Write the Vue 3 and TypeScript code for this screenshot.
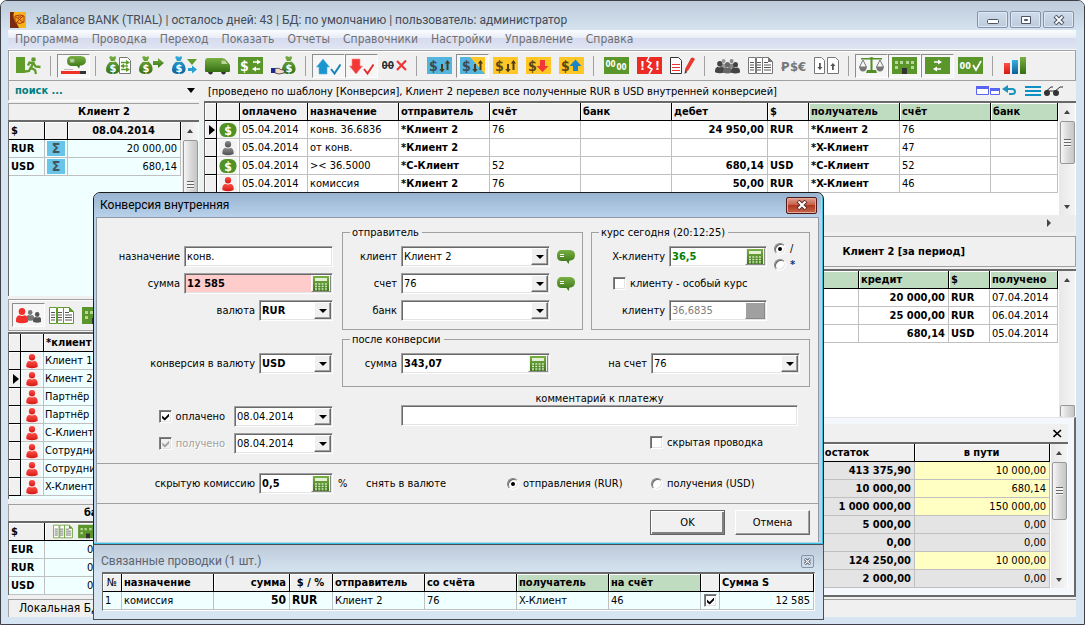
<script setup lang="ts">
import { ref } from 'vue'

interface Tool { icon?: string; label?: string; on?: boolean; sep?: boolean }
interface Entry { icon: string; date: string; note: string; from: string; acc: string; debit: string; cur: string; to: string; toAcc: string }

const bag = (fill: string) =>
  `<path fill="${fill}" d="M3 1 L5 0 L7 1 L9.500 0 L10 2 L8.500 5 C12 7 14 10 13.500 14 C13 17 10 18 7 18 C3 18 0 17 0 13.500 C0 10 2 7 5 5z"/><path d="M4 5.500h5" stroke="#dfeccb"/><text x="7" y="15.500" text-anchor="middle" class="ic" font-size="11" fill="#fff">$</text>`
const card = (c: string) => `<rect x="0" y="1" width="25" height="17" fill="${c}"/>`
const flow = '<g fill="#4a3c18"><path d="M14 8h2v5h1.700L15 16.500 12.300 13H14z"/><path d="M19.500 14h2V7.500h1.500L20.500 4 17.800 7.500h1.700z"/></g>'
const dollar = (c: string, x = 2) => `<text x="${x}" y="14.500" class="ic" font-size="14" fill="${c}">$</text>`
const man = (c: string, x: number, y: number, s: number) =>
  `<g transform="translate(${x} ${y}) scale(${s})" fill="${c}"><ellipse cx="6" cy="3.500" rx="3.300" ry="3.500"/><path d="M0 12Q0 8.500 3 7.300Q6 8.600 9 7.300Q12 8.500 12 12V14Q6 16.500 0 14z"/></g>`
const sheets = (c: string) =>
  `<g fill="#fff" stroke="${c}"><path d="M.500 1.500h7v16h-7z"/><path d="M8.500 1.500h6v16h-6z"/><path d="M14.500 1.500h6l4 4v12h-10z"/></g><path d="M20 1v5h5z" fill="${c}"/><path d="M2 6.500h4M2 9h4M2 11.500h4M2 14h4M9 6.500h4M9 9h4M9 11.500h4M9 14h4M16 6.500h4M16 9h7M16 11.500h7M16 14h7" stroke="#555"/>`
const bubble = '<path fill="url(#gg)" d="M4 0h9q5 .300 5 5t-4 5.500h-1.500L11.500 14 9.500 11H4Q0 10.500 0 5.500T4 0z"/><path d="M3 4.500h4M3 6.500h4" stroke="#fff"/>'
const windows = '<path fill="#b5d896" d="M3 5h3v3H3zM8 5h3v3H8zM14 5h3v3h-3zM19 5h3v3h-3zM3 10h3v3H3zM19 10h3v3h-3z"/><path fill="#333" d="M10 12h5v6h-5z"/>'

const icons: Record<string, string> = {
  exit: '<path fill="#5f9c2b" d="M0 1h9v16H0z"/><circle cx="17.500" cy="3.500" r="2.300" fill="#5f9c2b"/><path d="M12 9.500l1.500-3 4 .500 2 3.500 5 .500M17 7l-2 5 4 2 1 4M15 11l-2 4-4 .500" fill="none" stroke="#5f9c2b" stroke-width="2.300"/>',
  talk: `<g transform="translate(6 0) scale(1.050 .900)">${bubble}</g><path fill="#f03020" d="M0 15h19v3H0z"/><path fill="#333" d="M19 15h6v3h-6z"/><path d="M3 13.500h9" stroke="#bbb"/>`,
  bagDoc: `${bag('url(#gg)')}<path d="M13.500 1.500h8l3 3v13h-11z" fill="#fff" stroke="#777"/><path d="M15 6.500h7M15 10h7M15 13.500h7" stroke="#5f9c2b" stroke-width="1.500"/><path fill="#5f9c2b" d="M20 4l4 2.500-4 2.500zM18 7.500v5L14.500 10zM20 11l4 2.500-4 2.500z"/>`,
  bagOut: `${bag('url(#gg)')}<path fill="url(#gg)" d="M14 5h5V2l6 5-6 5V9h-5z"/>`,
  bagBlue: `${bag('url(#gb)')}<path fill="#5f9c2b" d="M15 3h10l-5 6z"/><path fill="#22a0d2" d="M16 12h4V9.500l5 4-5 4V15h-4z"/>`,
  van: '<path fill="url(#gg)" d="M2 2h15q3 0 5 3l3 4v6q0 1-1 1H1q-1 0-1-1V5q0-2 2-3z"/><path fill="#b9d59c" d="M16.500 4.500h3.500l2.500 3.500h-6z"/><path fill="#333" d="M3 16h5q-.500 2.500-2.500 2.500T3 16zM16 16h5q-.500 2.500-2.500 2.500T16 16z"/>',
  cardMove: `${card('#5a962a')}${dollar('#fff')}<path d="M15 6h6M16 13h6" stroke="#fff" stroke-width="1.500"/><path fill="#fff" d="M19 3.500l4 2.500-4 2.500zM18 10.500v5L14 13z"/>`,
  handBag: `<g transform="translate(11 0)">${bag('url(#gg)')}</g><path fill="#1a2a9c" d="M0 12h4v5H0z"/><path d="M4 12.500q4-1 6 1l4 1-1 2.500-5 1-4-1z" fill="#f3d8c8" stroke="#333" stroke-width=".8"/>`,
  upOk: '<path fill="#1c94cf" stroke="#56b4de" stroke-width=".6" d="M7 3l6.500 8H11v7H3v-7H.500z"/><path d="M15 13l3.500 4.500 6-9" fill="none" stroke="#1683b8" stroke-width="2"/>',
  downOk: '<path fill="#f23836" stroke="#f88" stroke-width=".6" d="M7 18L.500 10H3V3h8v7h2.500z"/><path d="M15 13l3.500 4.500 6-9" fill="none" stroke="#e0302c" stroke-width="2"/>',
  zeroX: '<text x="-.5" y="13" class="ic" font-size="10" fill="#333">00</text><path d="M0 9.500h12" stroke="#333" stroke-width="1.200"/><path d="M15 5l9 9M24 4.500L15 14" stroke="#ee3838" stroke-width="2.200"/>',
  exBlue: `${card('#53b4dd')}${dollar('#3e4a50')}${flow}`,
  exMix: `${card('#53b4dd')}<path fill="#ffc726" d="M10 1h15v17z"/>${dollar('#3e4a50')}${flow}`,
  exYel: `${card('#ffc726')}${dollar('#5b4515')}${flow}`,
  exDown: `${card('#ffc726')}${dollar('#5b4515')}<path fill="#f23836" d="M14 4h5v6h3.500l-6 6-6-6H14z"/>`,
  exUp: `${card('#ffc726')}${dollar('#5b4515')}<path fill="#1c84c4" d="M14 15h5v-5h3.500l-6-6.500-6 6.500H14z"/>`,
  zeros: `${card('#5a962a')}<text x="1.500" y="11" class="ic" font-size="8" fill="#fff">00</text><text x="12.500" y="14" class="ic" font-size="8" fill="#fff">00</text>`,
  alarm: `${card('#ee2a24')}<text x="3" y="14" class="ic" font-size="12" fill="#fff">!</text><text x="18" y="14" class="ic" font-size="12" fill="#fff">!</text><path d="M12 1l-2 4 4 2-3 4 4 2-3 5" fill="none" stroke="#fff" stroke-width="1.500"/>`,
  docPen: '<path d="M.500 1.500h8l3 3v13H.500z" fill="#fff" stroke="#333"/><path d="M2 8.500h8M2 11.500h8M2 14.500h8" stroke="#e33"/><path fill="#e63a30" d="M15 13L21 2q2-1.500 4 1l-6.500 11-3.500 3z"/><path fill="#444" d="M15 14.500l2.500 1.500-3 2z"/>',
  people: man('#999', 5, 3, .6) + man('#888', 13, 3, .6) + man('#444', 0, 5, .8) + man('#666', 8, 6, .75) + man('#444', 16, 6, .75),
  peopleRed: man('#777', 10, 4, .7) + man('#555', 17, 6, .7) + man('#f0302a', 0, 2, 1),
  sheets: sheets('#777'),
  sheetsGreen: sheets('#5f9c2b'),
  money: '<g class="ic" font-size="13" fill="#777"><text x="0" y="15">P</text><text x="9" y="15">$</text><text x="17" y="15">€</text></g><path d="M0 12h5" stroke="#777"/>',
  docs2: '<g fill="#fff" stroke="#777"><path d="M.500 1.500h7l3 3v13H.500z"/><path d="M13.500 1.500h8l3 3v13h-11z"/></g><path fill="#555" d="M5 7h1.800v4h1.700L5.900 14 3.300 11H5zM18 14h1.800v-4h1.700L18.900 7l-2.600 3H18z"/>',
  scale: '<path fill="#4f8f25" d="M11.500 2h2v12h-2zM8 14h9l1 3H7zM2 2h8l2.500-1L15 2h8v1.500H2z"/><path d="M4 4L.500 11h7zM21 4l-3.500 7h7z" fill="none" stroke="#777"/><path fill="#777" d="M0 11h8q-1 4.500-4 4.500T0 11zM17 11h8q-1 4.500-4 4.500T17 11z"/>',
  building: card('#5a962a') + windows,
  move: `${card('#5a962a')}<path d="M9 6h6M10 13h6" stroke="#fff" stroke-width="1.500"/><path fill="#fff" d="M13 3.500L17 6l-4 2.500zM12 10.500v5L8 13z"/>`,
  zeroOk: `${card('#5a962a')}<text x="1.500" y="13" class="ic" font-size="9" fill="#fff">00</text><path d="M15 9l3 5 5-9" fill="none" stroke="#fff" stroke-width="1.800"/>`,
  bars: '<path fill="url(#gr)" d="M1 7h6v11H1z"/><path fill="url(#gb)" d="M9 4h6v14H9z"/><path fill="url(#gg)" d="M17 1h6v17h-6z"/>',
  bubble,
}
const keypad = '<rect width="16" height="17" fill="url(#gg)"/><path fill="#e3f0d5" d="M2 2h12v3H2z"/><path d="M2 8h12M2 10.500h12M2 13h12M2 15.500h12" stroke="#d5e8c2" stroke-width="1.500" stroke-dasharray="2 1.300"/>'

const tools: Tool[] = [
  { icon: 'exit', label: 'Выход' }, { sep: true },
  { icon: 'talk', label: 'Сообщение', on: true }, { sep: true },
  { icon: 'bagDoc', label: 'Проводка' }, { icon: 'bagOut', label: 'Перевод' }, { icon: 'bagBlue', label: 'Конверсия' },
  { icon: 'van', label: 'Доставка' }, { icon: 'cardMove', label: 'Обмен' }, { icon: 'handBag', label: 'Выдача' }, { sep: true },
  { icon: 'upOk', label: 'Оплачено', on: true }, { icon: 'downOk', label: 'Получено', on: true }, { icon: 'zeroX', label: 'Без нулевых' }, { sep: true },
  { icon: 'exBlue', label: 'Все суммы' }, { icon: 'exMix', label: 'Смешанные', on: true }, { icon: 'exYel', label: 'В пути' },
  { icon: 'exDown', label: 'Расход' }, { icon: 'exUp', label: 'Приход' }, { sep: true },
  { icon: 'zeros', label: 'Копейки' }, { icon: 'alarm', label: 'Внимание' }, { icon: 'docPen', label: 'Правка' }, { sep: true },
  { icon: 'people', label: 'Клиенты' }, { icon: 'sheets', label: 'Счета' }, { icon: 'money', label: 'Валюты' }, { icon: 'docs2', label: 'Документы' }, { sep: true },
  { icon: 'scale', label: 'Баланс', on: true }, { icon: 'building', label: 'Банки', on: true }, { icon: 'move', label: 'Движение', on: true },
  { icon: 'zeroOk', label: 'Сверка' }, { sep: true },
  { icon: 'bars', label: 'График' },
]
const menu = ['Программа', 'Проводка', 'Переход', 'Показать', 'Отчеты', 'Справочники', 'Настройки', 'Управление', 'Справка']
const entries: Entry[] = [
  { icon: 'cash', date: '05.04.2014', note: 'конв. 36.6836', from: '*Клиент 2', acc: '76', debit: '24 950,00', cur: 'RUR', to: '*Клиент 2', toAcc: '76' },
  { icon: 'gray', date: '05.04.2014', note: 'от конв.', from: '*Клиент 2', acc: '', debit: '', cur: '', to: '*X-Клиент', toAcc: '47' },
  { icon: 'cash', date: '05.04.2014', note: '>< 36.5000', from: '*С-Клиент', acc: '52', debit: '680,14', cur: 'USD', to: '*С-Клиент', toAcc: '52' },
  { icon: 'red', date: '05.04.2014', note: 'комиссия', from: '*Клиент 2', acc: '76', debit: '50,00', cur: 'RUR', to: '*X-Клиент', toAcc: '46' },
]
const rowIcons: Record<string, string> = {
  cash: '<rect x="0" y="1" width="18" height="15" rx="7" fill="#4f9226"/><text x="9" y="13.500" text-anchor="middle" class="ic" font-size="13" fill="#fff">$</text>',
  gray: man('url(#gk)', 3, 1, 1),
  red: man('url(#gr)', 3, 1, 1),
}
const totals = [['RUR', '20 000,00'], ['USD', '680,14']]
const clients = ['Клиент 1', 'Клиент 2', 'Партнёр', 'Партнёр', 'С-Клиент', 'Сотрудник', 'Сотрудник', 'X-Клиент']
const balance = ['EUR', 'RUR', 'USD']
const credits = [['20 000,00', 'RUR', '07.04.2014'], ['25 000,00', 'RUR', '06.04.2014'], ['680,14', 'USD', '05.04.2014']]
const rests = [['413 375,90', '10 000,00'], ['10 000,00', '680,14'], ['1 000 000,00', '150 000,00'], ['5 000,00', '0,00'], ['0,00', '0,00'], ['124 250,00', '10 000,00'], ['2 000,00', '0,00']]

const purpose = ref('конв.')
const amount = ref('12 585')
const rate = ref('36,5')
const ownRate = ref('36,6835')
const result = ref('343,07')
const fee = ref('0,5')
const comment = ref('')
const paid = ref(true)
const received = ref(true)
const special = ref(false)
const hidden = ref(false)
const linked = ref(true)
const op = ref('div')
const feeCur = ref('from')
</script>

<template>
  <div class="app">
    <svg class="defs" width="0" height="0" aria-hidden="true">
      <defs>
        <linearGradient id="gg" x2="0" y2="1"><stop offset="0" stop-color="#79b043" /><stop offset="1" stop-color="#356f14" /></linearGradient>
        <linearGradient id="gr" x2="0" y2="1"><stop offset="0" stop-color="#ff5048" /><stop offset="1" stop-color="#d41814" /></linearGradient>
        <linearGradient id="gb" x2="0" y2="1"><stop offset="0" stop-color="#35b0e0" /><stop offset="1" stop-color="#0d5f96" /></linearGradient>
        <linearGradient id="gk" x2="0" y2="1"><stop offset="0" stop-color="#8a8a8a" /><stop offset="1" stop-color="#505050" /></linearGradient>
      </defs>
    </svg>

    <header class="title">
      <svg class="logo" viewBox="0 0 16 16" aria-hidden="true">
        <rect width="16" height="16" fill="#f8b21c" /><path d="M0 0h4q-2 6 3 12l2 4H0z" fill="#7a2a10" />
        <path d="M5 4q5-2 9 0v6q-4 3-9 0z" fill="#f6a01a" stroke="#a83a14" /><path d="M6 5l7 5M13 4L7 10M8 5h3" stroke="#a83a14" />
      </svg>
      <h1>xBalance BANK (TRIAL) | осталось дней: 43 | БД: по умолчанию | пользователь: администратор</h1>
      <div class="winbtns">
        <button aria-label="Свернуть"><svg viewBox="0 0 12 10"><rect x=".5" y="4.500" width="11" height="4" rx="1" fill="#fff" stroke="#4c5566" /></svg></button>
        <button aria-label="Развернуть"><svg viewBox="0 0 12 10"><path d="M1.500 1.500h9v7h-9z" fill="#fff" stroke="#4c5566" /><path d="M4.500 4.500h3v1h-3z" fill="#fff" stroke="#4c5566" /></svg></button>
        <button aria-label="Закрыть"><svg viewBox="0 0 12 10"><path d="M2 1l8 8M10 1L2 9" stroke="#4c5566" stroke-width="4" /><path d="M2.500 1.500l7 7M9.500 1.500l-7 7" stroke="#fff" stroke-width="1.800" /></svg></button>
      </div>
    </header>

    <div class="client">
      <nav class="menu"><button v-for="m in menu" :key="m">{{ m }}</button></nav>

      <div class="toolbar">
        <template v-for="(t, i) in tools" :key="i">
          <i v-if="t.sep" class="sep"></i>
          <button v-else class="tool" :class="{ on: t.on }" :aria-label="t.label"><svg viewBox="0 0 25 19" v-html="icons[t.icon!]"></svg></button>
        </template>
      </div>

      <main class="body">
        <aside class="left">
          <label class="search"><input type="text" placeholder="поиск ..." aria-label="поиск" /><i class="down"></i></label>
          <h2 class="cap">Клиент 2</h2>
          <div class="pane grow">
            <div class="cells">
              <table class="azure">
                <colgroup><col class="w36"><col class="w23"><col></colgroup>
                <thead><tr><th>$</th><th></th><th class="c">08.04.2014</th></tr></thead>
                <tbody><tr v-for="r in totals" :key="r[0]"><td><b>{{ r[0] }}</b></td><td class="pic"><span class="sigma">Σ</span></td><td class="r">{{ r[1] }}</td></tr></tbody>
              </table>
            </div>
            <div class="sb"><i class="up"></i><i class="thumb tall"></i><i class="dn"></i></div>
          </div>
          <div class="minibar">
            <button class="tool on" aria-label="Клиенты"><svg viewBox="0 0 25 19" v-html="icons.peopleRed"></svg></button>
            <button class="tool" aria-label="Счета"><svg viewBox="0 0 25 19" v-html="icons.sheetsGreen"></svg></button>
            <button class="tool" aria-label="Банки"><svg viewBox="0 0 25 19" v-html="icons.building"></svg></button>
          </div>
          <div class="pane">
            <div class="cells pad">
              <table class="azure">
                <colgroup><col class="w12"><col class="w23"><col></colgroup>
                <thead><tr><th></th><th></th><th>*клиент</th></tr></thead>
                <tbody>
                  <tr v-for="(c, i) in clients" :key="i">
                    <td class="ind"><i v-if="i === 1" class="cur"></i></td>
                    <td class="pic"><svg viewBox="0 0 18 17" v-html="rowIcons.red"></svg></td>
                    <td class="near">{{ c }}</td>
                  </tr>
                </tbody>
              </table>
            </div>
          </div>
          <h2 class="cap gap">баланс</h2>
          <div class="pane last">
            <div class="cells">
              <table class="azure">
                <colgroup><col class="w36"><col class="w68"><col></colgroup>
                <thead><tr><th>$</th><th><span class="pair"><svg viewBox="0 0 25 19" v-html="icons.sheetsGreen"></svg><svg viewBox="0 0 25 19" v-html="icons.building"></svg></span></th><th></th></tr></thead>
                <tbody><tr v-for="b in balance" :key="b"><td><b>{{ b }}</b></td><td class="r">0,00</td><td></td></tr></tbody>
              </table>
            </div>
          </div>
        </aside>

        <section class="right">
          <div class="info">
            <p>[проведено по шаблону [Конверсия], Клиент 2 перевел все полученные RUR в USD внутренней конверсией]</p>
            <svg class="marks" viewBox="0 0 90 14" aria-hidden="true">
              <g fill="#fff" stroke="#5a63f2"><path d="M.500 2.500h12v8H.500z" /><path d="M14.500 4.500h9v6h-9z" /></g><path d="M0 3.500h13M14 5.500h10" stroke="#5a63f2" stroke-width="3" />
              <path d="M31 5h5q3 0 3 2.500T36 10h-3" fill="none" stroke="#1c93bd" stroke-width="2" /><path fill="#1c93bd" d="M26 5l6-4v8z" />
              <path d="M49 3h16M49 7h16M49 11h16" stroke="#0e90c4" stroke-width="2" />
              <circle cx="71" cy="9" r="3" fill="#333" /><circle cx="80" cy="9" r="3" fill="#333" /><path d="M68 9l7-6h2M78 8l6-5h3M71 7h8" fill="none" stroke="#333" />
            </svg>
          </div>
          <div class="pane main">
            <div class="cells">
              <table>
                <colgroup><col class="w12"><col class="w23"><col class="w68"><col class="w91"><col class="w91"><col class="w91"><col class="w91"><col class="w96"><col class="w41"><col class="w91"><col class="w91"><col></colgroup>
                <thead>
                  <tr><th></th><th></th><th>оплачено</th><th>назначение</th><th>отправитель</th><th>счёт</th><th>банк</th><th>дебет</th><th>$</th><th class="green">получатель</th><th class="green">счёт</th><th class="green">банк</th></tr>
                </thead>
                <tbody>
                  <tr v-for="(e, i) in entries" :key="i">
                    <td class="ind"><i v-if="i === 0" class="cur"></i></td>
                    <td class="pic"><svg viewBox="0 0 18 17" v-html="rowIcons[e.icon]"></svg></td>
                    <td>{{ e.date }}</td><td>{{ e.note }}</td><td><b>{{ e.from }}</b></td><td>{{ e.acc }}</td><td></td>
                    <td class="r"><b>{{ e.debit }}</b></td><td><b>{{ e.cur }}</b></td><td><b>{{ e.to }}</b></td><td>{{ e.toAcc }}</td><td></td>
                  </tr>
                </tbody>
              </table>
            </div>
            <div class="sb"><i class="up"></i><i class="thumb mid"></i><i class="dn"></i></div>
          </div>
          <div class="hsb"><i></i></div>
          <h2 class="period"><span>Клиент 2 [за период]</span></h2>
          <div class="pane grow">
            <div class="cells">
              <table>
                <colgroup><col><col class="w90"><col class="w41"><col class="w68"></colgroup>
                <thead><tr><th class="green"></th><th class="green">кредит</th><th class="green">$</th><th class="green">получено</th></tr></thead>
                <tbody><tr v-for="c in credits" :key="c[2]"><td></td><td class="r"><b>{{ c[0] }}</b></td><td><b>{{ c[1] }}</b></td><td>{{ c[2] }}</td></tr></tbody>
              </table>
            </div>
            <div class="sb"><i class="up"></i><i class="thumb low"></i></div>
          </div>
          <div class="rest">
            <div class="resthead"><button aria-label="Закрыть остатки"><svg viewBox="0 0 9 9"><path d="M.500 1l7.500 7M8 1L.500 8" stroke="#000" stroke-width="1.600" /></svg></button></div>
            <div class="pane">
              <div class="cells">
                <table class="silver">
                  <colgroup><col><col class="w134"><col class="w135"></colgroup>
                  <thead><tr><th></th><th class="c">остаток</th><th class="c">в пути</th></tr></thead>
                  <tbody><tr v-for="(r, i) in rests" :key="i"><td></td><td class="r"><b>{{ r[0] }}</b></td><td class="r" :class="{ hot: r[1] !== '0,00' }">{{ r[1] }}</td></tr></tbody>
                </table>
              </div>
              <div class="sb"><i class="up"></i><i class="thumb rst"></i><i class="dn"></i></div>
            </div>
          </div>
        </section>
      </main>

      <footer class="status">Локальная БД</footer>
    </div>

    <form class="dialog" role="dialog" aria-label="Конверсия внутренняя" @submit.prevent>
      <div class="dtitle">
        <h2>Конверсия внутренняя</h2>
        <button type="button" class="x" aria-label="Закрыть"><svg viewBox="0 0 12 10"><path d="M2 1l8 8M10 1L2 9" stroke="#5b2b2b" stroke-width="4" /><path d="M2.500 1.500l7 7M9.500 1.500l-7 7" stroke="#fff" stroke-width="2" /></svg></button>
      </div>
      <div class="dbody">
        <div class="form">
          <div class="lcol">
            <div class="row"><label for="purpose">назначение</label><span class="field w149"><input id="purpose" v-model="purpose"></span></div>
            <div class="row"><label for="amount">сумма</label><span class="field w149 pink"><input id="amount" v-model="amount" class="bold"><button type="button" class="calc" aria-label="Калькулятор"><svg viewBox="0 0 16 17" v-html="keypad"></svg></button></span></div>
            <div class="row"><label for="cur">валюта</label><span class="combo w74"><select id="cur" class="bold"><option>RUR</option></select><i></i></span></div>
            <div class="row far"><label for="cur2">конверсия в валюту</label><span class="combo w74"><select id="cur2" class="bold"><option>USD</option></select><i></i></span></div>
            <div class="row far wide"><label><input v-model="paid" type="checkbox">оплачено</label><span class="combo w99"><select aria-label="Дата оплаты"><option>08.04.2014</option></select><i></i></span></div>
            <div class="row wide"><label class="off"><input v-model="received" type="checkbox" disabled>получено</label><span class="combo w99"><select aria-label="Дата получения"><option>08.04.2014</option></select><i></i></span></div>
          </div>
          <div class="rcol">
            <div class="sets">
              <fieldset>
                <legend>отправитель</legend>
                <div class="row s"><label for="cl">клиент</label><span class="combo w149"><select id="cl"><option>Клиент 2</option></select><i></i></span><button type="button" class="say" aria-label="Комментарий клиента"><svg viewBox="0 0 18 14" v-html="icons.bubble"></svg></button></div>
                <div class="row s"><label for="ac">счет</label><span class="combo w149"><select id="ac"><option>76</option></select><i></i></span><button type="button" class="say" aria-label="Комментарий счета"><svg viewBox="0 0 18 14" v-html="icons.bubble"></svg></button></div>
                <div class="row s"><label for="bk">банк</label><span class="combo w149"><select id="bk"><option></option></select><i></i></span></div>
              </fieldset>
              <fieldset>
                <legend>курс сегодня (20:12:25)</legend>
                <div class="row k"><label for="rate">X-клиенту</label><span class="field w98"><input id="rate" v-model="rate" class="bold rate"><button type="button" class="calc" aria-label="Калькулятор"><svg viewBox="0 0 16 17" v-html="keypad"></svg></button></span>
                  <span class="ops"><label><input v-model="op" type="radio" name="op" value="div">/</label><label><input v-model="op" type="radio" name="op" value="mul"><b class="star">*</b></label></span></div>
                <div class="row k"><label class="own"><input v-model="special" type="checkbox">клиенту - особый курс</label></div>
                <div class="row k"><label for="own">клиенту</label><span class="field w98"><input id="own" v-model="ownRate" disabled><button type="button" class="calc blank" disabled aria-label="Калькулятор"></button></span></div>
              </fieldset>
            </div>
            <fieldset class="after">
              <legend>после конверсии</legend>
              <div class="row s"><label for="res">сумма</label><span class="field w149"><input id="res" v-model="result" class="bold"><button type="button" class="calc" aria-label="Калькулятор"><svg viewBox="0 0 16 17" v-html="keypad"></svg></button></span><label for="to" class="to">на счет</label><span class="combo w149"><select id="to"><option>76</option></select><i></i></span></div>
            </fieldset>
            <div class="comment"><label for="cm">комментарий к платежу</label><span class="field"><input id="cm" v-model="comment"></span></div>
            <label class="hid"><input v-model="hidden" type="checkbox">скрытая проводка</label>
          </div>
        </div>
        <div class="fee">
          <div class="row feein"><label for="fee">скрытую комиссию</label><span class="field w74"><input id="fee" v-model="fee" class="bold"><button type="button" class="calc" aria-label="Калькулятор"><svg viewBox="0 0 16 17" v-html="keypad"></svg></button></span></div>
          <span class="pct">%</span><span class="take">снять в валюте</span>
          <label class="opt"><input v-model="feeCur" type="radio" name="fee" value="from">отправления (RUR)</label>
          <label class="opt"><input v-model="feeCur" type="radio" name="fee" value="to">получения (USD)</label>
        </div>
        <div class="acts"><button type="submit" class="btn def">OK</button><button type="button" class="btn">Отмена</button></div>
      </div>
    </form>

    <section class="linked">
      <div class="ltitle"><h2>Связанные проводки (1 шт.)</h2><button class="lx" aria-label="Закрыть"><svg viewBox="0 0 9 9"><path d="M1 1l7 7M8 1L1 8" stroke="#4c5566" stroke-width="3.500" /><path d="M1 1l7 7M8 1L1 8" stroke="#fff" stroke-width="1.400" /></svg></button></div>
      <div class="pane">
        <div class="cells">
          <table class="azure">
            <colgroup><col class="w19"><col class="w92"><col class="w76"><col class="w43"><col class="w92"><col class="w92"><col class="w92"><col class="w92"><col class="w19"><col></colgroup>
            <thead><tr><th class="thin">№</th><th>назначение</th><th class="r">сумма</th><th class="c">$ / %</th><th>отправитель</th><th>со счёта</th><th class="green">получатель</th><th class="green">на счёт</th><th></th><th>Сумма S</th></tr></thead>
            <tbody><tr><td>1</td><td>комиссия</td><td class="r big"><b>50</b></td><td class="big"><b>RUR</b></td><td>Клиент 2</td><td>76</td><td>X-Клиент</td><td>46</td><td class="pic"><input v-model="linked" type="checkbox" aria-label="Проведено"></td><td class="r">12 585</td></tr></tbody>
          </table>
        </div>
      </div>
    </section>
  </div>
</template>

<style>
html, body { background: #fff; }
.ic { font-family: "DejaVu Sans Condensed", "DejaVu Sans", sans-serif; font-weight: bold; }
</style>

<style scoped>
.app, .app * { box-sizing: border-box; }
.app { position: relative; display: flex; flex-direction: column; min-height: 100vh; padding: 0 8px 7px 7px; overflow: hidden; border: 1px solid #3d4046; border-radius: 7px 7px 0 0; background: #d7e4f2; color: #000; font: 11px/13px "DejaVu Sans Condensed", "DejaVu Sans", sans-serif; }
.defs { position: absolute; }
h1, h2, p { margin: 0; font-size: 11px; }
button, input, select { font: inherit; color: inherit; margin: 0; padding: 0; }
button { border: 0; background: none; }
svg { display: block; }

.title { display: flex; align-items: center; height: 29px; margin: 0 -8px 0 -7px; padding: 8px 10px 0 9px; background: linear-gradient(#bdcbda, #d5e2ef); }
.logo { width: 16px; height: 16px; }
.title h1, .dtitle h2, .ltitle h2 { flex: 1; font: 12px/16px Roboto, "Noto Sans", sans-serif; white-space: nowrap; }
.title h1 { margin-left: 10px; color: #454c58; }
.winbtns { display: flex; gap: 2px; }
.winbtns button { display: grid; place-items: center; width: 31px; height: 17px; border: 1px solid #8593a8; border-radius: 2px; background: linear-gradient(#d0dcea, #bccadb); box-shadow: inset 0 0 0 1px #dfe8f2; }
.winbtns svg { width: 12px; height: 10px; }

.client { display: flex; flex: 1; flex-direction: column; background: #f0f0f0; }
.menu { display: flex; gap: 13px; height: 20px; padding-left: 7px; border-bottom: 1px solid #f5f7fb; background: linear-gradient(#fcfdfe, #e8ecf6 40%, #d5dbee 41%, #e0e5f4); }
.menu button { font-size: 12px; color: #6f6f73; }
.toolbar { display: flex; align-items: center; height: 31px; padding-left: 3px; border: 1px solid #a0a0a0; box-shadow: inset 1px 1px #fff; }
.tool { display: grid; flex: none; place-items: center; width: 33px; height: 24px; border: 1px solid transparent; }
.tool.on { border-color: #8d8d8d #fff #fff #8d8d8d; background: #f6f6f6; }
.tool svg { width: 25px; height: 19px; }
.sep { flex: none; width: 12px; height: 20px; background: linear-gradient(#a0a0a0, #a0a0a0) 5px 0 / 1px 100% no-repeat; }

.body { display: grid; flex: 1; grid-template-columns: 191px minmax(0, 1fr); gap: 5px; }
.left, .right { display: flex; flex-direction: column; min-width: 0; }
.search { display: flex; align-items: center; height: 20px; margin-bottom: 2px; padding: 0 4px 0 6px; border-left: 1px solid #a0a0a0; border-bottom: 1px solid #fff; }
.search input { flex: 1; min-width: 0; border: 0; outline: 0; background: none; font-weight: bold; color: #008080; }
.search input::placeholder { color: #008080; opacity: 1; }
.down { border: 4px solid transparent; border-top: 5px solid #000; border-bottom: 0; }
.cap { height: 17px; border: 1px solid #a0a0a0; border-width: 1px 0 0 1px; text-align: center; line-height: 16px; }
.cap.gap { margin-top: 5px; }
.pane { display: flex; border: 1px solid #696969; border-width: 2px 0 0 1px; background: #fff; }
.left .pane { background: #f0ffff; }
.left .last { margin-bottom: 2px; }
.grow { flex: 1; min-height: 0; }
.cells { flex: 1; min-width: 0; overflow: hidden; }
.pad { padding-bottom: 3px; }
.minibar { display: flex; align-items: center; height: 32px; margin: 3px 0 1px; padding-left: 3px; border: 1px solid #a0a0a0; border-width: 1px 0 1px 1px; box-shadow: inset 0 1px #fff; }

table { width: 100%; table-layout: fixed; border-collapse: separate; border-spacing: 0; }
th, td { height: 18px; padding: 0 3px 0 2px; overflow: hidden; white-space: nowrap; text-align: left; line-height: 13px; }
th { border-right: 1px solid #000; border-bottom: 1px solid #000; background: #f0f0f0; box-shadow: inset 1px 1px #fff; }
td { border-right: 1px solid #c0c0c0; border-bottom: 1px solid #c0c0c0; }
.azure td { background: #f0ffff; }
.silver td { background: #e4e4e4; }
.silver td.hot { background: #ffffc4; }
th.green { background: #c0dcc0; }
.c { text-align: center; }
.r { text-align: right; }
.thin { padding: 0; font-weight: normal; text-align: center; }
.big { font-size: 12px; }
td.near { padding-left: 1px; }
td.ind, .azure td.ind { padding: 0; border-color: #000; background: #f0f0f0; box-shadow: inset 1px 1px #fff; }
.cur { display: block; width: 0; margin-left: 4px; border: 5px solid transparent; border-left: 6px solid #000; border-right: 0; }
.pic { padding: 0; text-align: center; }
.pic svg { width: 18px; height: 16px; margin: auto; background: #f4f4f4; }
.pic input[type="checkbox"] { margin: auto; }
.sigma { display: block; width: 18px; height: 15px; margin: auto; background: #68c4e8; color: #44545c; font-size: 14px; font-weight: bold; line-height: 15px; }
.pair { display: flex; gap: 3px; padding-left: 5px; }
.pair svg { width: 22px; height: 15px; }
.w12 { width: 12px; } .w19 { width: 19px; } .w23 { width: 23px; } .w36 { width: 36px; } .w41 { width: 41px; } .w43 { width: 43px; }
.w68 { width: 68px; } .w74 { width: 74px; } .w76 { width: 76px; } .w90 { width: 90px; } .w91 { width: 91px; } .w92 { width: 92px; } .w96 { width: 96px; }
.w98 { width: 98px; } .w99 { width: 99px; } .w134 { width: 134px; } .w135 { width: 135px; } .w149 { width: 149px; }

.sb { display: flex; flex: none; flex-direction: column; align-items: center; width: 16px; margin: 0 1px; background: linear-gradient(90deg, #e8e8e8, #f4f4f4); }
.up { margin: 7px 0; border: 3px solid transparent; border-bottom: 4px solid #444; border-top: 0; }
.dn { margin: auto 0 6px; border: 3px solid transparent; border-top: 4px solid #444; border-bottom: 0; }
.thumb { display: grid; place-items: center; width: 15px; border: 1px solid #989898; border-radius: 2px; background: linear-gradient(90deg, #f6f6f6, #dadada 50%, #c6c6c6); }
.thumb::after { content: ""; width: 7px; height: 8px; background: repeating-linear-gradient(#666 0 1px, #f4f4f4 1px 3px); }
.tall { height: 90px; }
.mid { height: 43px; }
.rst { height: 58px; }
.low { height: 12px; margin-top: auto; border-bottom: 0; }
.low::after { content: none; }

.info { display: flex; align-items: center; height: 20px; padding: 0 10px 0 4px; }
.info p { flex: 1; min-width: 0; overflow: hidden; white-space: nowrap; }
.marks { width: 90px; height: 14px; }
.main { height: 114px; }
.hsb { height: 17px; padding: 4px 23px 0 0; background: #ececec; border-right: 2px solid #f0f0f0; }
.hsb i { display: block; width: 4px; margin-left: auto; border: 4px solid transparent; border-left: 4px solid #444; border-right: 0; }
.period { display: flex; align-items: center; height: 31px; margin: 4px 0 2px; border: 1px solid #a0a0a0; border-left-color: #fff; }
.period span { margin-left: auto; margin-right: 110px; }
.rest { padding: 6px 6px 7px 4px; border: 1px solid #e4e4e4; border-right: 2px solid #696969; border-bottom: 2px solid #696969; background: #f4f8fd; }
.resthead { display: flex; justify-content: flex-end; align-items: center; height: 18px; padding-right: 6px; background: #f0f0f0; }
.resthead svg { width: 9px; height: 9px; }
.status { height: 18px; margin-top: 2px; padding-left: 10px; border: 1px solid #a0a0a0; border-width: 1px 0 0 1px; font-size: 12px; line-height: 16px; }

.dialog { position: absolute; left: 92px; top: 191px; width: 731px; padding: 0 4px 2px 2px; border: 1px solid #1c1c1c; border-radius: 7px 7px 0 0; background: #b9d1ea; box-shadow: inset -1px -1px #35c5e0; }
.dtitle { display: flex; align-items: center; height: 24px; margin: 0 -2px; padding: 0 4px 0 6px; border-radius: 6px 6px 0 0; background: linear-gradient(#98b4d1, #b9d1ea); }
.x { display: grid; place-items: center; width: 31px; height: 17px; border: 1px solid #4c1a1c; border-radius: 2px; background: linear-gradient(#e0a090, #c8604a 45%, #b03820 50%, #c8684c); box-shadow: inset 0 0 0 1px #e4a898; }
.x svg { width: 12px; height: 10px; }
.dbody { border: 1px solid #8f9aa6; border-width: 1px 1px 0; background: #f0f0f0; }
.form { display: grid; grid-template-columns: 236px minmax(0, 1fr); gap: 9px; padding: 0 8px 9px 0; border-bottom: 1px solid #a0a0a0; }
.lcol { display: flex; flex-direction: column; gap: 6px; padding-top: 28px; }
.row { display: flex; align-items: center; justify-content: flex-end; gap: 4px; height: 21px; }
.row.wide { gap: 9px; }
.far { margin-top: 26px; }
label { white-space: nowrap; }
.off { color: #a0a0a0; text-shadow: 1px 1px #fff; }
.field, .combo { height: 21px; border: 1px solid; border-color: #a0a0a0 #fff #fff #a0a0a0; background: #fff; box-shadow: inset 1px 1px #696969, inset -1px -1px #e3e3e3; padding: 1px 1px 1px 2px; }
.field { display: flex; }
.field.pink { background: #ffcccc; }
.field input { flex: 1; width: 0; min-width: 0; border: 0; outline: 0; background: none; }
.field input:disabled { color: #808080; }
.bold { font-weight: bold; }
.bold.rate { color: #008000; }
.combo { display: grid; grid-template-columns: minmax(0, 1fr) 17px; }
.combo select { grid-column: 1 / 3; grid-row: 1; appearance: none; border: 0; outline: 0; background: none; border-radius: 0; }
.combo i { grid-column: 2; grid-row: 1; display: grid; place-items: center; border: 1px solid; border-color: #fff #696969 #696969 #fff; background: #f0f0f0; pointer-events: none; box-shadow: inset -1px -1px #a0a0a0; }
.combo i::after { content: ""; border: 4px solid transparent; border-top: 4px solid #000; border-bottom: 0; }
.calc { width: 20px; padding: 0 1px; border: 1px solid; border-color: #fff #888 #888 #fff; background: #f0f0f0; overflow: hidden; }
.calc svg { width: 16px; height: 17px; }
.calc.blank { background: #a0a0a0; }
input[type="checkbox"], input[type="radio"] { appearance: none; flex: none; display: grid; place-items: center; width: 13px; height: 13px; border: 1px solid; border-color: #808080 #fff #fff #808080; background: #fff; box-shadow: inset 1px 1px #696969, inset -1px -1px #e3e3e3; }
input[type="checkbox"]:checked::before { content: ""; width: 7px; height: 7px; margin: 1px 0 0 1px; background: #000; clip-path: polygon(0 30%, 38% 65%, 100% 0, 100% 38%, 38% 100%, 0 68%); }
input[type="checkbox"]:disabled { background: #f0f0f0; }
input[type="checkbox"]:disabled::before { background: #a0a0a0; }
input[type="radio"] { width: 12px; height: 12px; border-radius: 50%; }
input[type="radio"]:checked::before { content: ""; width: 4px; height: 4px; border-radius: 50%; background: #000; }
label:has(> input) { display: flex; align-items: center; gap: 4px; }
.rcol { padding-top: 8px; }
.sets { display: grid; grid-template-columns: 241px minmax(0, 1fr); gap: 8px; }
fieldset { min-width: 0; margin: 0; padding: 7px 0 8px; border: 1px solid #a0a0a0; }
legend { height: 13px; margin-left: 7px; padding: 0 3px 0 2px; }
fieldset .row + .row { margin-top: 6px; }
.row.s, .row.k { justify-content: flex-start; }
.row.s > label:first-child { width: 54px; text-align: right; }
.row.k > label:first-child { width: 73px; text-align: right; }
.row.k > label.own { width: auto; padding-left: 21px; }
.say { margin-left: 3px; }
.say svg { width: 18px; height: 14px; }
.ops { display: grid; gap: 3px; margin-left: 3px; }
.star { color: #004080; }
.after { margin-top: 3px; padding-bottom: 12px; }
.row.s > .to { width: 93px; text-align: right; }
.comment { display: grid; margin: 5px 12px 0 59px; text-align: center; }
.hid { justify-content: flex-start; width: max-content; margin: 10px 0 0 308px; }
.fee { display: flex; align-items: center; height: 40px; border-bottom: 1px solid #a0a0a0; }
.feein { width: 236px; }
.pct { width: 27px; padding-left: 5px; }
.take { width: 147px; padding-left: 6px; }
.opt { width: 144px; }
.acts { display: flex; justify-content: flex-end; gap: 10px; padding: 6px 8px 7px; }
.btn { width: 75px; height: 25px; border: 1px solid; border-color: #fff #696969 #696969 #fff; background: #f0f0f0; box-shadow: inset -1px -1px #a0a0a0; }
.btn.def { border-color: #646464; box-shadow: inset 1px 1px #fff, inset -2px -2px #808080; }

.linked { position: absolute; left: 92px; top: 543px; width: 731px; padding: 0 8px 8px; border: 1px solid #4a4d52; background: #d7e4f2; }
.ltitle { display: flex; align-items: center; height: 27px; margin: 0 -8px; padding: 5px 9px 0 7px; background: linear-gradient(#bdcbda, #d5e2ef); }
.ltitle h2 { color: #5b6470; }
.lx { display: grid; place-items: center; width: 13px; height: 13px; border: 1px solid #8593a8; border-radius: 2px; }
.lx svg { width: 7px; height: 7px; }
.linked .pane { border-right: 1px solid #fff; border-bottom: 1px solid #fff; }
</style>
